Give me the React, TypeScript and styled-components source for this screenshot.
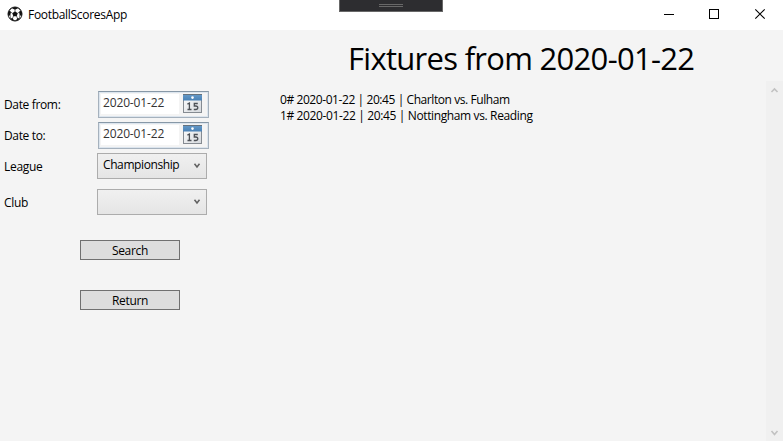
import React from "react";
import styled, { createGlobalStyle } from "styled-components";

const GlobalStyle = createGlobalStyle`
  * { box-sizing: border-box; }
  body { margin: 0; overflow: hidden; background: #f4f4f4; }
`;

const Window = styled.div`
  display: flex;
  flex-direction: column;
  width: 783px;
  height: 441px;
  background: #f4f4f4;
  color: #000;
  font: 12px/16px "Open Sans", "Noto Sans", sans-serif;
  white-space: nowrap;
`;

const TitleBar = styled.header`
  position: relative;
  display: flex;
  align-items: center;
  flex: none;
  height: 30px;
  padding-left: 7px;
  background: #fff;
`;

const AppIcon = styled.svg`
  width: 16px;
  height: 16px;
  margin-top: -3px;
`;

const Label = styled.span<{ $spacing?: number }>`
  letter-spacing: ${(p) => p.$spacing ?? -0.3}px;
`;

const AppName = styled(Label)`
  margin-left: 5px;
`;

const DebugTab = styled.div`
  position: absolute;
  left: 339px;
  top: 0;
  display: flex;
  justify-content: center;
  width: 104px;
  height: 12px;
  padding-top: 4px;
  background: #2d2d30;
  border: 1px solid #686868;
  border-top: 0;
`;

const Grip = styled.div`
  width: 24px;
  height: 3px;
  border: solid #686868;
  border-width: 1px 0;
`;

const Controls = styled.svg`
  width: 138px;
  height: 30px;
  margin-left: auto;
`;

const Body = styled.main`
  display: flex;
  flex: 1;
  min-height: 0;
`;

const Sidebar = styled.aside`
  width: 280px;
  padding-top: 61px;
`;

const Field = styled.div<{ $gap: number; $inset: number }>`
  display: grid;
  grid-template-columns: ${(p) => p.$inset}px auto;
  grid-template-rows: 26px;
  justify-content: start;
  align-items: center;
  height: 26px;
  margin-bottom: ${(p) => p.$gap}px;
`;

const FieldName = styled(Label)`
  padding: 2px 0 0 4px;
`;

const DateBox = styled.div`
  display: flex;
  justify-content: space-between;
  width: 111px;
  height: 27px;
  padding: 2px 5px 2px 2px;
  border: 1px solid #a5b1bd;
  border-top-color: #8798a7;
  box-shadow: inset 0 0 0 1px #dce5ee;
  align-self: start;
`;

const DateValue = styled(Label)`
  width: 78px;
  height: 20px;
  padding: 1px 0 0 2px;
  background: #fff;
  color: #333;
`;

const CalendarIcon = styled.svg`
  width: 20px;
  height: 20px;
`;

const ComboBox = styled.div`
  display: flex;
  justify-content: space-between;
  width: 110px;
  height: 26px;
  padding: 3px 5px 0;
  border: 1px solid #acacac;
  background: linear-gradient(#f0f0f0, #e5e5e5);
`;

const Arrow = styled.svg`
  width: 8px;
  height: 8px;
  margin-top: 5px;
`;

const Button = styled.button`
  display: block;
  width: 100px;
  height: 20px;
  margin: 25px 0 30px 80px;
  padding: 1px 0 0;
  border: 1px solid #707070;
  background: #ddd;
  color: #000;
  font: inherit;
  line-height: 17px;
  text-align: center;
  & + & { margin-top: 0; }
`;

const Results = styled.section`
  display: flex;
  flex-direction: column;
  flex: 1;
`;

const Heading = styled.h1`
  height: 51px;
  margin: 0;
  padding: 7px 0 0 68px;
  font-size: 31px;
  font-weight: 400;
  line-height: 42px;
  letter-spacing: -0.71px;
`;

const ResultArea = styled.div`
  display: flex;
  justify-content: space-between;
  flex: 1;
`;

const Fixtures = styled.div`
  display: flex;
  flex-direction: column;
  padding-top: 11px;
`;

const ScrollBar = styled.div`
  display: flex;
  flex-direction: column;
  justify-content: space-between;
  align-items: center;
  width: 17px;
  padding: 5px 0 4px;
  background: #f0f0f0;
`;

const ScrollArrow = styled.svg`
  width: 9px;
  height: 9px;
`;

const Football = () => (
  <AppIcon viewBox="0 0 16 16">
    <circle cx="8" cy="8" r="7" fill="#fff" stroke="#111" strokeWidth="1" />
    <path
      fill="#111"
      d="M8 5.3 10.7 7.2 9.7 10.3H6.3L5.3 7.2ZM4.4 2 8 1l3.6 1L8 3.8ZM1 6.5 2.6 4.4 4 6.1 3.3 9.2 1.2 9.8ZM15 6.5 13.4 4.4 12 6.1l.7 3.1 2.1.6ZM3.1 12.5l2.5-.5 1.6 2.8-2.3-.5ZM12.9 12.5l-2.5-.5-1.6 2.8 2.3-.5Z"
    />
    <path
      fill="none"
      stroke="#222"
      strokeWidth=".65"
      d="M8 3.5v2M5.5 7.3 3.7 6M10.5 7.3 12.3 6M6.5 10l-1 2.3M9.5 10l1 2.3M4.5 2 2.7 4.5M11.5 2l1.8 2.5M3 9l.5 3.5M13 9l-.5 3.5M7 14.5h2"
    />
  </AppIcon>
);

const Calendar = () => (
  <CalendarIcon viewBox="0 0 20 20">
    <defs>
      <linearGradient id="header" x2="0" y2="1">
        <stop stopColor="#6297c6" />
        <stop offset="1" stopColor="#4a82b6" />
      </linearGradient>
      <linearGradient id="page" x2="1" y2="1">
        <stop stopColor="#fff" />
        <stop offset="1" stopColor="#d4d8dd" />
      </linearGradient>
    </defs>
    <rect x=".5" y=".5" width="18" height="18" fill="url(#page)" stroke="#858b92" />
    <path d="M0 1h19v5.500H0z" fill="url(#header)" />
    <path d="M0 .5h19" stroke="#65727e" />
    <circle cx="9.5" cy="3.6" r="1.3" fill="#fff" />
    <path
      d="M4.4 10.100 6.400 9v7M4.500 15.500H8.500M14.800 9.500h-3.500v2.500h1.500c2.700 0 2.600 3.500 0 3.500h-2"
      fill="none"
      stroke="#4c5056"
      strokeWidth="1.3"
    />
  </CalendarIcon>
);

const Chevron = () => (
  <Arrow viewBox="0 0 8 8">
    <path d="M1.5 1.7 4 5l2.500-3.300" fill="none" stroke="#606060" strokeWidth="1.5" />
  </Arrow>
);

const dates = [
  { name: "Date from:", value: "2020-01-22", gap: 5 },
  { name: "Date to:", value: "2020-01-22", gap: 5 },
];

const selects = [
  { name: "League", value: "Championship", gap: 10 },
  { name: "Club", value: "", gap: 0 },
];

const fixtures = [
  { text: "0# 2020-01-22 | 20:45 | Charlton vs. Fulham", spacing: -0.42 },
  { text: "1# 2020-01-22 | 20:45 | Nottingham vs. Reading", spacing: -0.37 },
];

export default function App() {
  return (
    <Window>
      <GlobalStyle />
      <TitleBar>
        <Football />
        <AppName>FootballScoresApp</AppName>
        <DebugTab>
          <Grip />
        </DebugTab>
        <Controls viewBox="0 0 138 30" fill="none" stroke="#000">
          <path d="M19 14.5h10" />
          <rect x="64.5" y="9.5" width="9" height="9" />
          <path d="m110.300 9.300 9.400 9.400m0-9.400-9.400 9.400" strokeWidth="1.1" />
        </Controls>
      </TitleBar>
      <Body>
        <Sidebar>
          {dates.map((d) => (
            <Field key={d.name} $gap={d.gap} $inset={98}>
              <FieldName $spacing={-0.35}>{d.name}</FieldName>
              <DateBox>
                <DateValue $spacing={-0.15}>{d.value}</DateValue>
                <Calendar />
              </DateBox>
            </Field>
          ))}
          {selects.map((s) => (
            <Field key={s.name} $gap={s.gap} $inset={97}>
              <FieldName>{s.name}</FieldName>
              <ComboBox>
                <Label $spacing={-0.4}>{s.value}</Label>
                <Chevron />
              </ComboBox>
            </Field>
          ))}
          <Button>
            <Label>Search</Label>
          </Button>
          <Button>
            <Label>Return</Label>
          </Button>
        </Sidebar>
        <Results>
          <Heading>Fixtures from 2020-01-22</Heading>
          <ResultArea>
            <Fixtures>
              {fixtures.map((f) => (
                <Label key={f.text} $spacing={f.spacing}>
                  {f.text}
                </Label>
              ))}
            </Fixtures>
            <ScrollBar>
              <ScrollArrow viewBox="0 0 9 9">
                <path d="M1.5 6 4.5 3l3 3" fill="none" stroke="#c2c2c2" strokeWidth="1.6" />
              </ScrollArrow>
              <ScrollArrow viewBox="0 0 9 9">
                <path d="m1.5 3 3 3.500 3-3.500" fill="none" stroke="#c2c2c2" strokeWidth="1.6" />
              </ScrollArrow>
            </ScrollBar>
          </ResultArea>
        </Results>
      </Body>
    </Window>
  );
}
